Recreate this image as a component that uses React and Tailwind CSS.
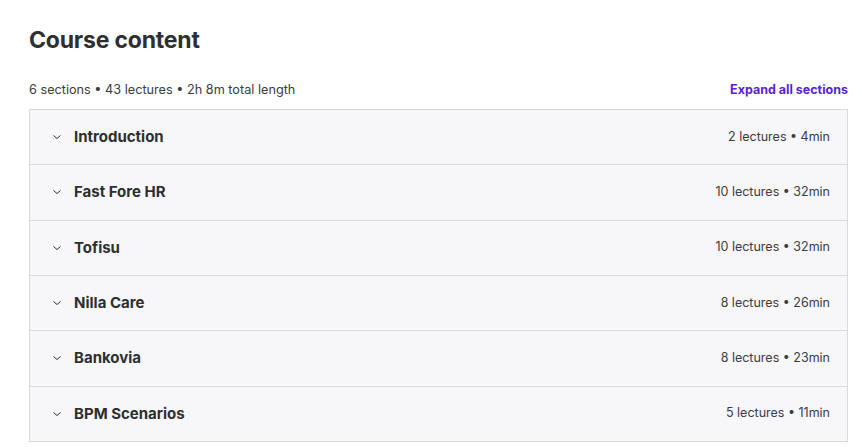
import React from "react";

const sections = [
  { title: "Introduction", meta: "2 lectures • 4min" },
  { title: "Fast Fore HR", meta: "10 lectures • 32min" },
  { title: "Tofisu", meta: "10 lectures • 32min" },
  { title: "Nilla Care", meta: "8 lectures • 26min" },
  { title: "Bankovia", meta: "8 lectures • 23min" },
  { title: "BPM Scenarios", meta: "5 lectures • 11min" },
];

const Chevron = () => (
  <svg width="10" height="8" viewBox="0 0 10 8" className="text-[#2d2f31]">
    <path d="M1.5 2.5 L5 5.5 L8.5 2.5" fill="none" stroke="currentColor" strokeWidth="1" />
  </svg>
);

const App = () => {
  return (
    <div
      className="w-[861px] h-[447px] bg-white text-[#2d2f31] overflow-hidden"
      style={{ fontFamily: "Inter, 'Noto Sans', sans-serif" }}
    >
      <div className="pl-[29px] pr-[13px] pt-[26px]">
        <h2 className="text-[23px] leading-[28px] font-bold tracking-[-0.2px]">Course content</h2>
        <div className="flex items-end justify-between mt-[28px] mb-[11px]">
          <span className="text-[12.7px] leading-[16px] text-[#3a3c3e]">
            6 sections • 43 lectures • 2h 8m total length
          </span>
          <button className="text-[12.5px] leading-[16px] font-bold text-[#5624d0]">
            Expand all sections
          </button>
        </div>
        <div className="border-x border-b border-[#d8dadc]">
          {sections.map((s, i) => (
            <div
              key={i}
              className="flex items-center justify-between h-[55.33px] bg-[#f7f7f9] border-t border-[#d8dadc] pl-[22px] pr-[17px]"
            >
              <div className="flex items-center gap-[12px]">
                <Chevron />
                <span className="text-[15px] font-bold">{s.title}</span>
              </div>
              <span className="text-[12.5px] text-[#3a3c3e]">{s.meta}</span>
            </div>
          ))}
        </div>
      </div>
    </div>
  );
};

export default App;
